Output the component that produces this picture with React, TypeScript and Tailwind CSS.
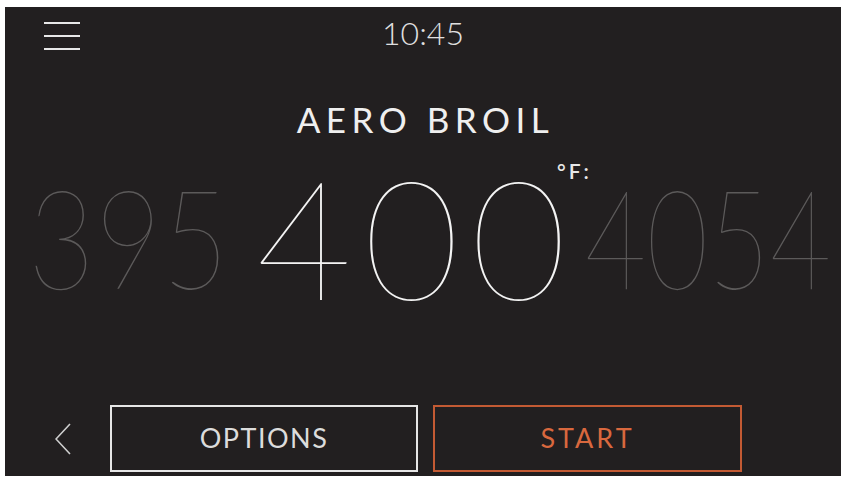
const font = { fontFamily: "Lato, 'Open Sans', sans-serif" };

const Side = ({ value, scale }: { value: string; scale: string }) => (
  <div
    className={`shrink-0 text-[139px] font-extralight leading-[104px] text-[#5c5a5a] origin-right ${scale}`}
  >
    {value}
  </div>
);

export default function App() {
  return (
    <div className="w-[846px] h-[479px] bg-white pt-[7px] pl-[5px]" style={font}>
      <div className="w-[836px] h-[469px] bg-[#221f20] flex flex-col overflow-hidden">
        {/* top bar */}
        <div className="relative h-[58px] flex items-start">
          <div className="ml-[39px] mt-[15px] flex flex-col gap-[11px] w-[36px]">
            <span className="h-[2px] bg-[#e8e8e8]" />
            <span className="h-[2px] bg-[#e8e8e8]" />
            <span className="h-[2px] bg-[#e8e8e8]" />
          </div>
          <div className="absolute left-0 right-0 top-[7px] text-center text-[32px] font-light text-[#e0e0e0] leading-none pt-[3px]">
            10:45
          </div>
        </div>

        {/* mode */}
        <div className="mt-[37px] text-center text-[35px] tracking-[5.5px] pl-[5px] text-[#efefef] leading-none">
          AERO BROIL
        </div>

        {/* temperature drum */}
        <div className="mt-[34px] h-[130px] flex items-center">
          <div className="shrink-0 w-[224px] flex justify-end">
            <Side value="395" scale="scale-x-[0.83]" />
          </div>
          <div className="shrink-0 ml-[27px] relative">
            <div className="text-[166px] font-extralight leading-[112px] text-[#f4f4f4] tracking-[11px]">
              400
            </div>
            <div className="absolute left-[301px] top-[-20px] text-[21px] font-semibold text-[#e8e8e8] leading-none tracking-[3px]">
              °F:
            </div>
          </div>
          <div className="flex-1 min-w-0 flex justify-end pr-[10px]">
            <Side value="4054" scale="scale-x-[0.765]" />
          </div>
        </div>

        {/* bottom actions */}
        <div className="mt-auto mb-[4px] flex items-center">
          <div className="w-[105px] pl-[50px]">
            <svg width="16" height="32" viewBox="0 0 16 32" fill="none">
              <polyline
                points="15,1 1,16 15,31"
                stroke="#cfcfcf"
                strokeWidth="1.6"
                strokeLinejoin="miter"
              />
            </svg>
          </div>
          <button className="w-[308px] h-[67px] border-2 border-[#e6e6e6] text-[27px] text-[#dcdcdc] tracking-[1.5px]">
            OPTIONS
          </button>
          <button className="ml-[15px] w-[309px] h-[67px] border-2 border-[#c35a33] text-[27px] text-[#d9683e] tracking-[3px]">
            START
          </button>
        </div>
      </div>
    </div>
  );
}
